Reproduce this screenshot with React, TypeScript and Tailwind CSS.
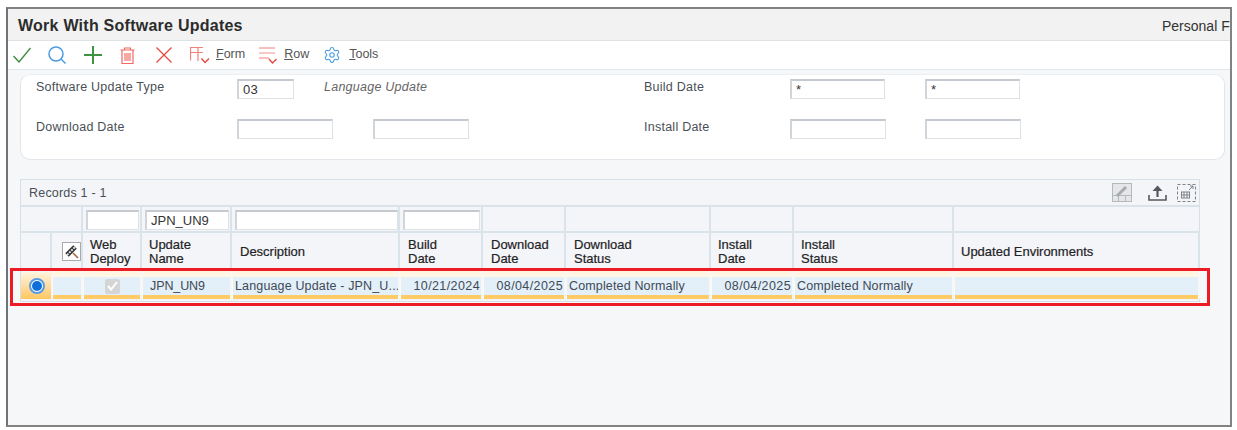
import { Settings } from "lucide-react"

const gridCols = "grid grid-cols-[31px_31px_59px_90px_168px_83px_83px_145px_83px_160px_246px]"

function Field({ value, className }: { value?: string; className: string }) {
  return (
    <div className={`h-[20px] shrink-0 bg-white border border-[#dde2e6] border-t-2 border-t-[#c4cacf] border-l-2 border-l-[#d0d5d9] px-[4px] text-[13px] leading-[18px] text-[#333] ${className}`}>
      {value}
    </div>
  )
}

function Head({ children, pl = "pl-[8px]" }: { children?: React.ReactNode; pl?: string }) {
  return (
    <div className={`border-r-2 border-[#dbe3ea] flex items-center pt-[2px] ${pl} text-[13px] leading-[14px] text-[#1f2326] [-webkit-text-stroke:0.2px_#1f2326]`}>
      <div>{children}</div>
    </div>
  )
}

function Cell({ children, className = "" }: { children?: React.ReactNode; className?: string }) {
  return (
    <div className="border-r-2 border-[#f6f7f9] h-[29px] mt-[1px] flex flex-col bg-gradient-to-b from-[#fff4df] to-white pl-[1px]">
      <div className="h-[7px] shrink-0" />
      <div className={`flex-1 bg-[#e3eff9] border-b-[4px] border-[#ffcb66] flex items-center whitespace-nowrap overflow-hidden text-[12.5px] text-[#404a55] ${className}`}>
        {children}
      </div>
    </div>
  )
}

export default function App() {
  return (
    <div className="w-[1237px] h-[430px] bg-white overflow-hidden pt-[7px] pl-[6px] font-['Liberation_Sans',Arial,sans-serif]">
      <div className="relative w-[1226px] h-[420px] border-2 border-[#808284] border-l-[#6f7478] bg-[#f6f7f9] flex flex-col">
        {/* Title bar */}
        <div className="h-[32px] shrink-0 bg-[#f2f2f2] border-b border-[#dfe2e4] flex items-center justify-between pl-[10px] pt-[3px] overflow-hidden">
          <h1 className="text-[16px] font-bold text-[#2c2c2c] tracking-[0.25px]">Work With Software Updates</h1>
          <span className="text-[14px] text-[#333] w-[68px] whitespace-nowrap shrink-0">Personal F</span>
        </div>

        {/* Toolbar */}
        <div className="h-[29px] shrink-0 bg-white border-b border-[#e3e6e9] flex items-center pl-[5px] text-[12.5px] text-[#555]">
          <svg width="18" height="16" viewBox="0 0 18 16" fill="none" stroke="#3e8e41" strokeWidth="1.4"><path d="M0.5 9 L6 15 L17.5 1" /></svg>
          <svg className="ml-[17px]" width="18" height="18" viewBox="0 0 18 18" fill="none" stroke="#4a9be0" strokeWidth="1.5"><circle cx="8" cy="8" r="7" /><path d="M13 13 L17.5 17.5" /></svg>
          <svg className="ml-[18px]" width="18" height="18" viewBox="0 0 18 18" fill="none" stroke="#3c9440" strokeWidth="2"><path d="M9 0 V18 M0 9 H18" /></svg>
          <svg className="ml-[18px]" width="15" height="17" viewBox="0 0 15 17" fill="none" stroke="#ee6a63" strokeWidth="1.2"><path d="M0.5 3 H14.5 M4.5 3 V1 H10.5 V3 M2 3 V16.5 H13 V3" /><rect x="4" y="6" width="7" height="8" fill="#f6a8a3" stroke="none" /></svg>
          <svg className="ml-[21px]" width="16" height="16" viewBox="0 0 16 16" fill="none" stroke="#e8483f" strokeWidth="1.3"><path d="M0.5 0.5 L15.5 15.5 M15.5 0.5 L0.5 15.5" /></svg>
          <svg className="ml-[18px]" width="20" height="17" viewBox="0 0 20 17" fill="none" strokeWidth="1.2"><path d="M0.5 13.5 V0.5 H13 M0.5 5.5 H13 M8 0.5 V14" stroke="#f0827b" /><path d="M11.5 11.5 L15 15.5 L19 11.5" stroke="#e8483f" strokeWidth="1.4" /></svg>
          <span className="ml-[6px] mb-[1px]"><span className="underline">F</span>orm</span>
          <svg className="ml-[14px]" width="18" height="17" viewBox="0 0 18 17" fill="none" strokeWidth="1.2"><path d="M0 1 H16 M0 11 H10" stroke="#f0827b" /><path d="M0 6 H16" stroke="#f8bcb8" strokeWidth="1.6" /><path d="M10 12 L13.5 16 L17.5 12" stroke="#e8483f" strokeWidth="1.4" /></svg>
          <span className="ml-[7px] mb-[1px]"><span className="underline">R</span>ow</span>
          <Settings className="ml-[14px] text-[#4a9be0]" size={18} strokeWidth={1.4} />
          <span className="ml-[8px] mb-[1px]"><span className="underline">T</span>ools</span>
        </div>

        {/* Search form */}
        <div className="ml-[12px] mt-[4px] w-[1205px] h-[86px] shrink-0 bg-white border border-[#e2e6ea] border-t-[#eceff2] rounded-[10px] pl-[15px] text-[12.5px] tracking-[0.25px] text-[#4a4f55]">
          <div className="flex items-start mt-[4px] h-[20px]">
            <span className="w-[201px] shrink-0 leading-[16px]">Software Update Type</span>
            <Field value="03" className="w-[57px]" />
            <span className="ml-[30px] w-[320px] shrink-0 italic text-[#666] leading-[16px]">Language Update</span>
            <span className="w-[146px] shrink-0 leading-[16px]">Build Date</span>
            <Field value="*" className="w-[95px]" />
            <Field value="*" className="w-[95px] ml-[40px]" />
          </div>
          <div className="flex items-start mt-[20px] h-[20px]">
            <span className="w-[201px] shrink-0 leading-[16px]">Download Date</span>
            <Field className="w-[96px]" />
            <Field className="w-[96px] ml-[40px]" />
            <span className="ml-[175px] w-[146px] shrink-0 leading-[16px]">Install Date</span>
            <Field className="w-[96px]" />
            <Field className="w-[96px] ml-[39px]" />
          </div>
        </div>

        {/* Records grid */}
        <div className="ml-[12px] mt-[19px] w-[1180px] border border-[#d8e0e7] bg-[#f3f5f8]">
          <div className="h-[27px] border-b-2 border-[#dbe3ea] flex items-center justify-between pl-[8px] pr-[3px] text-[12.5px] text-[#4a4f55]">
            <span className="tracking-[0.2px] pt-[2px]">Records 1 - 1</span>
            <div className="flex items-center">
              <svg width="20" height="19" viewBox="0 0 20 19" fill="none" stroke="#b5b9bc" strokeWidth="1"><rect x="0.5" y="0.5" width="19" height="18" fill="#e4e6e8" /><path d="M0 12.5 H20 M6.5 12 V19 M13.5 12 V19" /><path d="M5 13 L14 4" stroke="#a6abaf" strokeWidth="3" /></svg>
              <svg className="ml-[16px]" width="19" height="16" viewBox="0 0 19 16" fill="none" stroke="#55595e" strokeWidth="1.6"><path d="M9.5 12 V4" strokeWidth="2.2" /><path d="M4.5 6 L9.5 0.5 L14.5 6 Z" fill="#55595e" stroke="none" /><path d="M1 10 V15 H18 V10" /></svg>
              <svg className="ml-[10px]" width="19" height="18" viewBox="0 0 19 18" fill="none" stroke="#7e8388" strokeWidth="1"><rect x="0.5" y="0.5" width="18" height="17" strokeDasharray="3 2" /><rect x="4.5" y="8" width="8" height="6" /><path d="M4.5 11 H12.5 M7 8 V14 M10 8 V14 M12 6 L16 2 M13 2 H16 V5" /></svg>
            </div>
          </div>

          {/* Filter row */}
          <div className={`${gridCols} h-[26px] border-b-2 border-[#dbe3ea]`}>
            <div className="col-span-2 border-r-2 border-[#dbe3ea]" />
            <div className="border-r-2 border-[#dbe3ea] pl-[3px] pt-[3px]"><Field className="w-[53px]" /></div>
            <div className="border-r-2 border-[#dbe3ea] pl-[3px] pt-[3px]"><Field value="JPN_UN9" className="w-[84px]" /></div>
            <div className="border-r-2 border-[#dbe3ea] pl-[3px] pt-[3px]"><Field className="w-[163px]" /></div>
            <div className="border-r-2 border-[#dbe3ea] pl-[3px] pt-[3px]"><Field className="w-[77px]" /></div>
            <div className="border-r-2 border-[#dbe3ea]" />
            <div className="border-r-2 border-[#dbe3ea]" />
            <div className="border-r-2 border-[#dbe3ea]" />
            <div className="border-r-2 border-[#dbe3ea]" />
            <div />
          </div>

          {/* Header row */}
          <div className={`${gridCols} h-[35px]`}>
            <Head />
            <Head pl="pl-[10px]">
              <div className="w-[19px] h-[19px] border border-[#aaa] bg-white flex items-center justify-center">
                <svg width="15" height="15" viewBox="0 0 15 15" fill="none"><path d="M3 11 L11 3" stroke="#333" strokeWidth="5" /><path d="M3 11 L11 3" stroke="#e5e5e5" strokeWidth="2" strokeDasharray="2 1" /><path d="M9 9 L14 14" stroke="#a5643a" strokeWidth="1.5" /></svg>
              </div>
            </Head>
            <Head pl="pl-[7px]">Web<br />Deploy</Head>
            <Head pl="pl-[7px]">Update<br />Name</Head>
            <Head>Description</Head>
            <Head>Build<br />Date</Head>
            <Head>Download<br />Date</Head>
            <Head>Download<br />Status</Head>
            <Head pl="pl-[7px]">Install<br />Date</Head>
            <Head pl="pl-[7px]">Install<br />Status</Head>
            <Head pl="pl-[7px]">Updated Environments</Head>
          </div>

          {/* Selected row */}
          <div className={`${gridCols} h-[33px] border-t border-[#f6f7f9]`}>
            <div className="h-[27px] mt-[3px] mr-[1px] bg-gradient-to-b from-[#fff4df] to-[#ffc65c] flex items-center justify-center">
              <span className="ml-[1px] w-[16px] h-[16px] rounded-full bg-white border-2 border-[#5a9be6] flex items-center justify-center">
                <span className="w-[10px] h-[10px] rounded-full bg-[#0f6fd8]" />
              </span>
            </div>
            <Cell />
            <Cell className="justify-center">
              <span className="w-[15px] h-[15px] bg-[#d5d5d5] rounded-[2px] flex items-center justify-center">
                <svg width="11" height="10" viewBox="0 0 11 10" fill="none" stroke="#fff" strokeWidth="2"><path d="M1 5 L4 8.5 L10 1" /></svg>
              </span>
            </Cell>
            <Cell className="pl-[7px] text-[#2a4a78] tracking-[-0.1px]">JPN_UN9</Cell>
            <Cell className="pl-[2px] tracking-[0.15px]">Language Update - JPN_U...</Cell>
            <Cell className="justify-end pr-[1px] tracking-[0.4px]">10/21/2024</Cell>
            <Cell className="justify-end pr-[1px] tracking-[0.4px]">08/04/2025</Cell>
            <Cell className="pl-[2px] tracking-[0.15px]">Completed Normally</Cell>
            <Cell className="justify-end pr-[1px] tracking-[0.4px]">08/04/2025</Cell>
            <Cell className="pl-[2px] tracking-[0.15px]">Completed Normally</Cell>
            <Cell />
          </div>
        </div>

        {/* Red highlight drawn over the row */}
        <div className="absolute left-[2px] top-[259px] w-[1200px] h-[38px] border-[3px] border-[#ed1c24]" />
      </div>
    </div>
  )
}
